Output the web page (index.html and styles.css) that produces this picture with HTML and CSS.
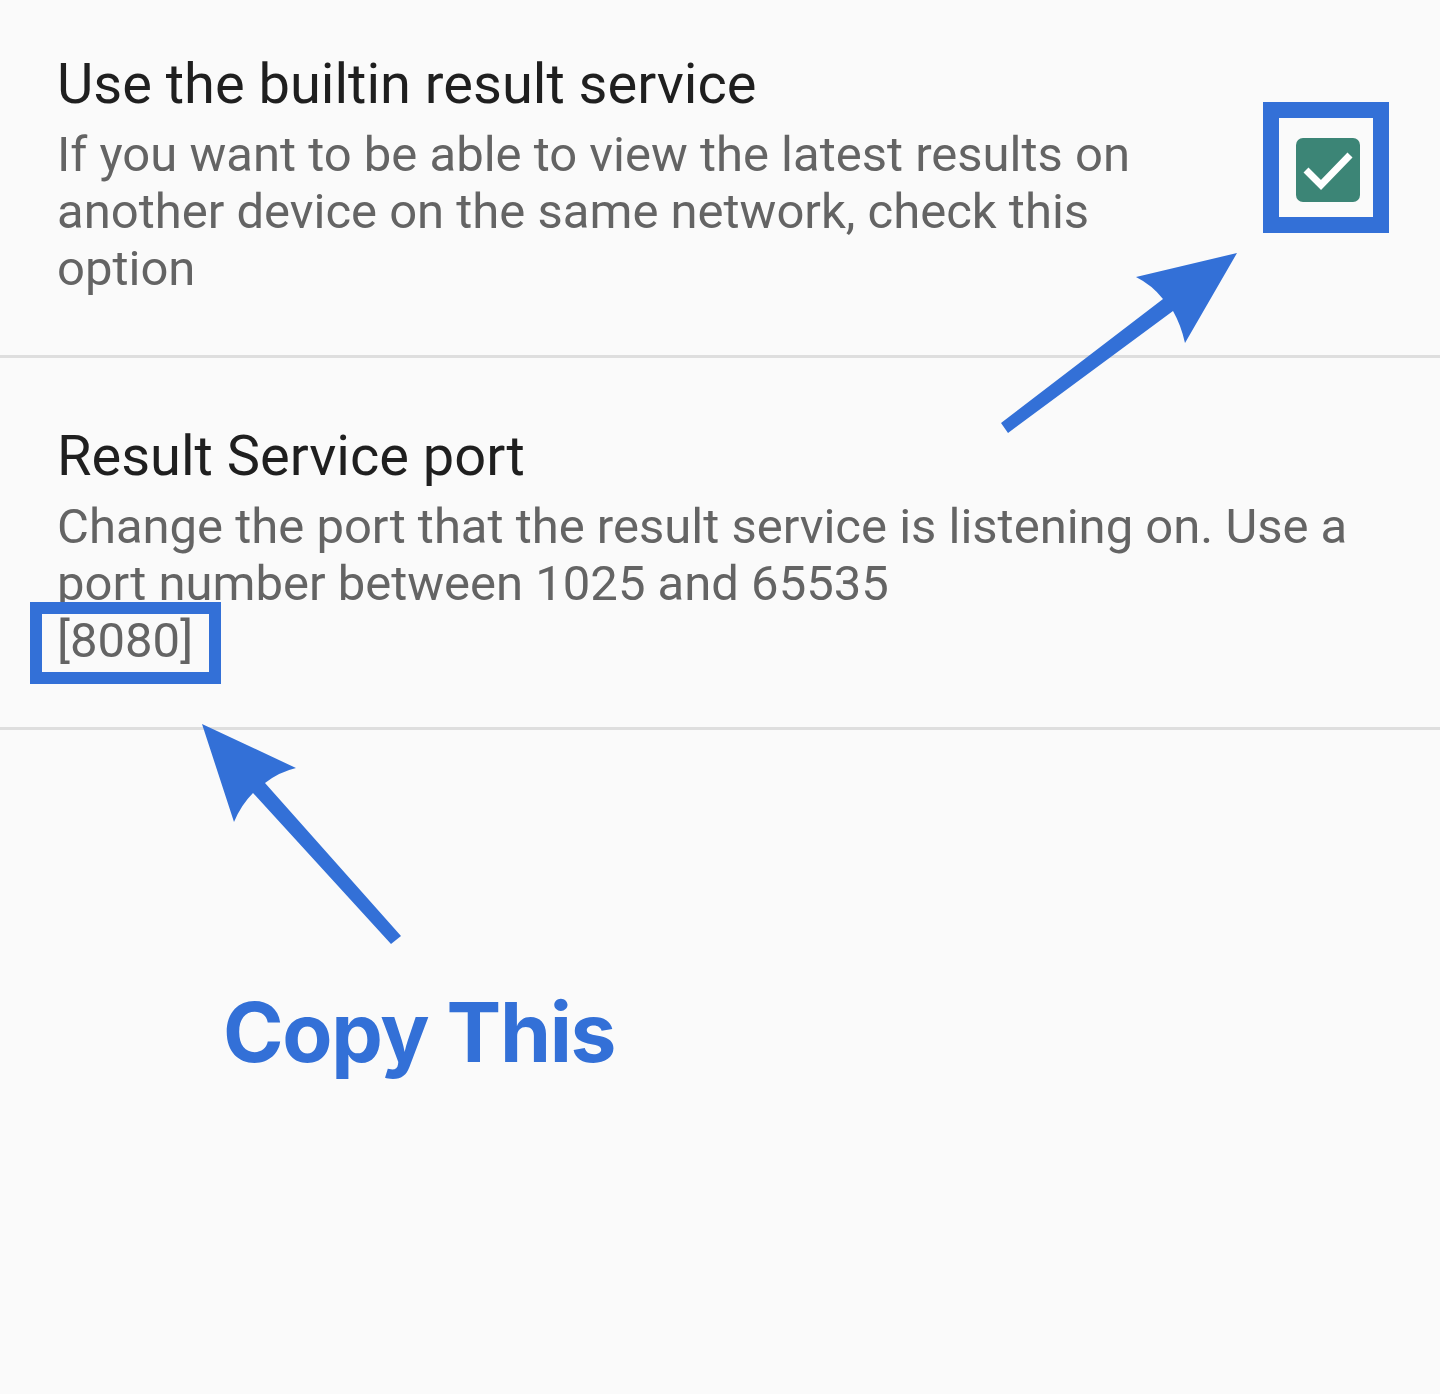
FILE: index.html
```html
<!DOCTYPE html>
<html lang="en">
<head>
<meta charset="utf-8">
<title>Result service settings</title>
<link rel="stylesheet" href="styles.css">
</head>
<body>
<div class="page">
  <div class="pref pref-first">
    <div class="pref-text pref-text-narrow">
      <div class="pref-title">Use the builtin result service</div>
      <div class="pref-summary">If you want to be able to view the latest results on another device on the same network, check this option</div>
    </div>
    <div class="pref-widget">
      <div class="highlight-box">
        <div class="checkbox">
          <svg width="64" height="64" viewBox="0 0 64 64" aria-hidden="true">
            <rect x="0" y="0" width="64" height="64" rx="7" fill="#3c8576"/>
            <path d="M10 32 L25 47 L54 17" fill="none" stroke="#ffffff" stroke-width="7"/>
          </svg>
        </div>
      </div>
    </div>
  </div>
  <div class="divider"></div>
  <div class="pref pref-second">
    <div class="pref-text">
      <div class="pref-title">Result Service port</div>
      <div class="pref-summary">Change the port that the result service is listening on. Use a port number between 1025 and 65535</div>
      <div class="pref-summary"><span class="value-hl">[8080]</span></div>
    </div>
  </div>
  <div class="divider"></div>
  <div class="copy-note">Copy This</div>

  <svg class="annotations" width="1440" height="1394" viewBox="0 0 1440 1394" aria-hidden="true">
    <path d="M1001 423 L1163 299 Q1152 285 1136 277 L1237 253 L1185 343 Q1181 325 1173 311 L1008 433 Z" fill="#3370d7"/>
    <path d="M401 936 L265 783 Q279 772 296 768 L202 724 L234 822 Q241 805 253 793 L391 944 Z" fill="#3370d7"/>
  </svg>
</div>
</body>
</html>
```

FILE: styles.css
```css
html, body {
  margin: 0;
  padding: 0;
}

body {
  background: #fafafa;
  font-family: Roboto, "Noto Sans", sans-serif;
  width: 1440px;
  height: 1394px;
  overflow: hidden;
}

.page {
  position: relative;
  width: 1440px;
  height: 1394px;
}

.pref {
  display: flex;
  align-items: flex-start;
  padding: 0 51px 58px 57px;
}

.pref-first {
  padding-top: 51px;
}

.pref-second {
  padding-top: 65px;
}

.pref-text {
  flex: 1;
  display: flex;
  flex-direction: column;
}

.pref-text-narrow {
  flex: 0 0 1150px;
}

.pref-title {
  font-size: 56px;
  line-height: normal;
  color: #1f1f1f;
  margin-bottom: 9px;
}

.pref-summary {
  font-size: 49px;
  line-height: 57px;
  color: #646464;
}

.pref-widget {
  margin-left: auto;
  margin-top: 51px;
}

.highlight-box {
  width: 94px;
  height: 99px;
  border: 16px solid #3370d7;
  box-sizing: content-box;
  display: flex;
}

.checkbox {
  margin: 20px 0 0 17px;
  width: 64px;
  height: 64px;
}

.checkbox svg {
  display: block;
}

.divider {
  height: 3px;
  background: #dedede;
}

.value-hl {
  position: relative;
}

.value-hl::after {
  content: "";
  position: absolute;
  left: -27px;
  right: -28px;
  top: -10px;
  bottom: -15px;
  border: 12px solid #3370d7;
}

.copy-note {
  margin: 253px 0 0 223px;
  font-family: Inter, "Noto Sans", sans-serif;
  font-weight: 700;
  font-size: 82px;
  letter-spacing: -1.3px;
  line-height: normal;
  color: #3370d7;
}

.annotations {
  position: absolute;
  left: 0;
  top: 0;
  pointer-events: none;
}
```
